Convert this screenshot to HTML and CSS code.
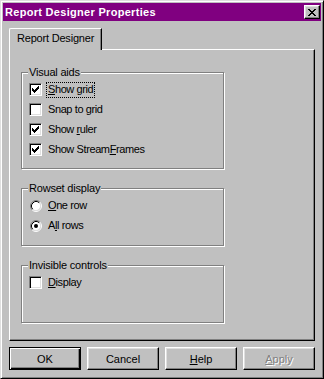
FILE: index.html
```html
<!DOCTYPE html>
<html lang="en">
<head>
    <meta charset="UTF-8">
    <title>Report Designer Properties</title>
    <link rel="stylesheet" href="styles.css">
</head>
<body>

<div class="window">
    <div class="titlebar">
        <span class="title">Report Designer Properties</span>
        <button class="close">
            <svg width="8" height="7" viewBox="0 0 8 7" shape-rendering="crispEdges">
                <path fill="#000" d="M0 0h2v1H0zM6 0h2v1H6zM1 1h2v1H1zM5 1h2v1H5zM2 2h4v1H2zM3 3h2v1H3zM2 4h4v1H2zM1 5h2v1H1zM5 5h2v1H5zM0 6h2v1H0zM6 6h2v1H6z"/>
            </svg>
        </button>
    </div>

    <div class="dialog">
        <div class="tabs">
            <div class="tab">Report Designer</div>
        </div>

        <div class="panel">
            <fieldset class="group group-visual">
                <legend>Visual aids</legend>
                <div class="option">
                    <span class="check checked"></span>
                    <span class="label focus"><u>S</u>how grid</span>
                </div>
                <div class="option">
                    <span class="check"></span>
                    <span class="label">Snap to grid</span>
                </div>
                <div class="option">
                    <span class="check checked"></span>
                    <span class="label">Show <u>r</u>uler</span>
                </div>
                <div class="option">
                    <span class="check checked"></span>
                    <span class="label">Show Stream<u>F</u>rames</span>
                </div>
            </fieldset>

            <fieldset class="group group-small">
                <legend>Rowset display</legend>
                <div class="option">
                    <span class="radio"></span>
                    <span class="label"><u>O</u>ne row</span>
                </div>
                <div class="option">
                    <span class="radio selected"></span>
                    <span class="label">A<u>l</u>l rows</span>
                </div>
            </fieldset>

            <fieldset class="group group-small">
                <legend>Invisible controls</legend>
                <div class="option">
                    <span class="check"></span>
                    <span class="label"><u>D</u>isplay</span>
                </div>
            </fieldset>
        </div>

        <div class="buttons">
            <button class="btn default">OK</button>
            <button class="btn">Cancel</button>
            <button class="btn"><u>H</u>elp</button>
            <button class="btn disabled"><u>A</u>pply</button>
        </div>
    </div>
</div>

<script>
    // check marks and radio circles are drawn once here
    var checkSvg = '<svg width="7" height="7" viewBox="0 0 7 7" shape-rendering="crispEdges">' +
        '<path fill="#000" d="M6 0h1v1H6zM5 1h2v1H5zM0 2h1v1H0zM4 2h3v1H4zM0 3h2v1H0zM3 3h3v1H3zM0 4h5v1H0zM1 5h3v1H1zM2 6h1v1H2z"/></svg>';

    var radioSvg = '<svg width="12" height="12" viewBox="0 0 12 12">' +
        '<circle cx="6" cy="6" r="4.5" fill="#fff"/>' +
        '<path d="M2.11 9.89A5.5 5.5 0 0 1 9.89 2.11" fill="none" stroke="#808080"/>' +
        '<path d="M9.89 2.11A5.5 5.5 0 0 1 2.11 9.89" fill="none" stroke="#fff"/>' +
        '<path d="M2.82 9.18A4.5 4.5 0 0 1 9.18 2.82" fill="none" stroke="#000"/>' +
        '<path d="M9.18 2.82A4.5 4.5 0 0 1 2.82 9.18" fill="none" stroke="#dfdfdf"/>' +
        '<circle class="dot" cx="6" cy="6" r="2" fill="#000"/></svg>';

    document.querySelectorAll('.check.checked').forEach(function(el) {
        el.innerHTML = checkSvg;
    });
    document.querySelectorAll('.radio').forEach(function(el) {
        el.innerHTML = radioSvg;
        if (!el.classList.contains('selected')) {
            el.querySelector('.dot').remove();
        }
    });
</script>

</body>
</html>
```

FILE: styles.css
```css
body {
    margin: 0;
    font-family: "Liberation Sans", Arial, sans-serif;
    font-size: 11px;
    line-height: 13px;
    color: #000;
}
.window {
    width: 324px;
    height: 379px;
    box-sizing: border-box;
    background: #c0c0c0;
    border: 1px solid;
    border-color: #dfdfdf #000 #000 #dfdfdf;
    box-shadow: inset 1px 1px #fff, inset -1px -1px #808080;
    padding: 2px;
    display: flex;
    flex-direction: column;
}
.titlebar {
    height: 18px;
    background: #800080;
    display: flex;
    justify-content: space-between;
    align-items: center;
    padding: 0 1px 0 2px;
}
.title {
    color: #fff;
    font-weight: bold;
    letter-spacing: 0.3px;
}
.close {
    width: 16px;
    height: 14px;
    padding: 0;
    box-sizing: border-box;
    background: #c0c0c0;
    border: 1px solid;
    border-color: #fff #000 #000 #fff;
    box-shadow: inset -1px -1px #808080, inset 1px 1px #dfdfdf;
    display: flex;
    justify-content: center;
    align-items: center;
}
.dialog {
    flex: 1;
    padding: 7px 6px 6px;
    display: flex;
    flex-direction: column;
}
.tabs {
    display: flex;
    position: relative;
    z-index: 1;
    margin-bottom: -1px;
}
.tab {
    width: 93px;
    height: 22px;
    box-sizing: border-box;
    padding: 3px 0 0 7px;
    letter-spacing: -0.2px;
    background: #c0c0c0;
    border: 1px solid;
    border-bottom: none;
    border-color: #fff #000 #000 #fff;
    border-top-left-radius: 2px;
    box-shadow: inset -1px 0 #808080;
}
.panel {
    height: 292px;
    box-sizing: border-box;
    border: 1px solid;
    border-color: #fff #000 #000 #fff;
    box-shadow: inset -1px -1px #808080;
    padding: 16px 11px 0;
}
.group {
    width: 203px;
    box-sizing: border-box;
    margin: 0;
    padding: 4px 7px 0;
    border: 1px solid #808080;
    box-shadow: 1px 1px 0 #fff, inset 1px 1px 0 #fff;
    display: flex;
    flex-direction: column;
    gap: 7px;
}
.group + .group { margin-top: 13px; }
.group-visual { height: 103px; }
.group-small { height: 64px; }
.group legend {
    padding: 0 1px;
    margin-left: -1px;
    letter-spacing: -0.2px;
    background: #c0c0c0;
}
.option {
    height: 13px;
    display: flex;
    align-items: center;
}
.check {
    width: 13px;
    height: 13px;
    box-sizing: border-box;
    background: #fff;
    border: 1px solid;
    border-color: #808080 #fff #fff #808080;
    box-shadow: inset 1px 1px #000, inset -1px -1px #dfdfdf;
    display: flex;
    justify-content: center;
    align-items: center;
    flex-shrink: 0;
}
.radio {
    width: 13px;
    height: 12px;
    padding-left: 1px;
    box-sizing: border-box;
    display: flex;
    flex-shrink: 0;
}
.label {
    margin-left: 4px;
    padding: 0 1px 1px;
    letter-spacing: -0.4px;
    border: 1px dotted transparent;
}
.label.focus { border-color: #000; }
.buttons {
    margin-top: 6px;
    display: flex;
    gap: 6px;
}
.btn {
    width: 72px;
    height: 23px;
    padding: 0;
    box-sizing: border-box;
    font-family: inherit;
    font-size: 11px;
    color: #000;
    background: #c0c0c0;
    border: 1px solid;
    border-color: #fff #000 #000 #fff;
    box-shadow: inset -1px -1px #808080, inset 1px 1px #dfdfdf;
}
.btn.default {
    border-color: #000;
    box-shadow: inset 1px 1px #fff, inset -1px -1px #000, inset -2px -2px #808080;
}
.btn.disabled {
    color: #808080;
    text-shadow: 1px 1px #fff;
}
```
